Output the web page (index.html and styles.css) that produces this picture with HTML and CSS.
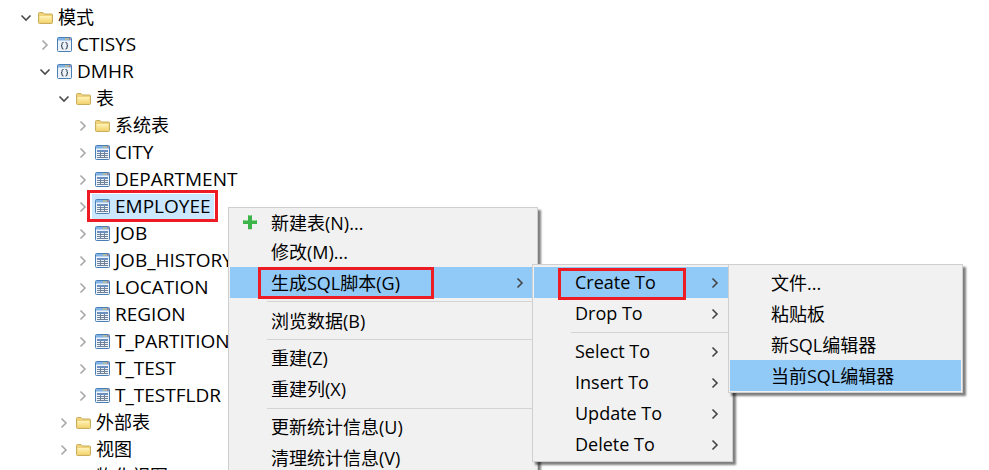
FILE: index.html
```html
<!DOCTYPE html>
<html lang="zh-CN">
<head>
    <meta charset="UTF-8">
    <meta name="viewport" content="width=device-width, initial-scale=1.0">
    <title>DM Manager</title>
    <link rel="stylesheet" href="styles.css">
</head>
<body>
    <svg class="defs" width="0" height="0">
        <linearGradient id="folder-fill" x1="0" y1="0" x2="0" y2="1">
            <stop offset="0" stop-color="#fff3b8"/>
            <stop offset="1" stop-color="#f4d46e"/>
        </linearGradient>
        <symbol id="i-folder" viewBox="0 0 15 12">
            <path d="M.5 10.500V1.500q0-1 1-1h3.500l1.500 1.500h7q1 0 1 1v7.500q0 1-1 1h-12q-1 0-1-1z" fill="#efd27a" stroke="#c8ae5a"/>
            <path d="M1.500 4h12v6.500h-12z" fill="url(#folder-fill)"/>
        </symbol>
        <symbol id="i-schema" viewBox="0 0 15 15">
            <rect x=".5" y=".5" width="14" height="14" rx="1" fill="#eef3f9" stroke="#4a7fb5"/>
            <rect x="1" y="1" width="13" height="2.500" fill="#7fb2e6"/>
            <path d="M8 2h2M10.500 2h1.500" stroke="#e8c54c"/>
            <path d="M12 2h1.500" stroke="#d9534f"/>
            <path d="M6.500 5.500q-1.500 0-1.500 1v1.200q0 1-1 1 1 0 1 1v1.300q0 1 1.500 1M8.500 5.500q1.500 0 1.500 1v1.200q0 1 1 1-1 0-1 1v1.300q0 1-1.500 1" fill="none" stroke="#1f2e44"/>
        </symbol>
        <symbol id="i-table" viewBox="0 0 15 15">
            <rect x=".5" y=".5" width="14" height="14" rx="1" fill="#eef3f9" stroke="#4a7fb5"/>
            <rect x="1" y="1" width="13" height="2.500" fill="#7fb2e6"/>
            <path d="M8 2h2M10.500 2h1.500" stroke="#e8c54c"/>
            <path d="M12 2h1.500" stroke="#d9534f"/>
            <rect x="2" y="5" width="11" height="2" fill="#6b8fbf"/>
            <path d="M2 8.500h11M2 10.500h11M2 12.500h11M5.500 7v6M9.500 7v6" stroke="#6f8299" fill="none"/>
        </symbol>
        <symbol id="i-right" viewBox="0 0 8 12">
            <path d="M1.500 1.500L6 6l-4.500 4.500" fill="none" stroke="currentColor" stroke-width="1.600"/>
        </symbol>
        <symbol id="i-down" viewBox="0 0 12 8">
            <path d="M1.500 1.500L6 6l4.500-4.500" fill="none" stroke="currentColor" stroke-width="1.600"/>
        </symbol>
    </svg>

    <ul class="tree">
        <li>
            <div class="row"><svg class="tw open"><use href="#i-down"/></svg><svg class="icon folder"><use href="#i-folder"/></svg><span class="cn">模式</span></div>
            <ul>
                <li><div class="row"><svg class="tw"><use href="#i-right"/></svg><svg class="icon"><use href="#i-schema"/></svg><span>CTISYS</span></div></li>
                <li>
                    <div class="row"><svg class="tw open"><use href="#i-down"/></svg><svg class="icon"><use href="#i-schema"/></svg><span>DMHR</span></div>
                    <ul>
                        <li>
                            <div class="row"><svg class="tw open"><use href="#i-down"/></svg><svg class="icon folder"><use href="#i-folder"/></svg><span class="cn">表</span></div>
                            <ul>
                                <li><div class="row"><svg class="tw"><use href="#i-right"/></svg><svg class="icon folder"><use href="#i-folder"/></svg><span class="cn">系统表</span></div></li>
                                <li><div class="row"><svg class="tw"><use href="#i-right"/></svg><svg class="icon"><use href="#i-table"/></svg><span>CITY</span></div></li>
                                <li><div class="row"><svg class="tw"><use href="#i-right"/></svg><svg class="icon"><use href="#i-table"/></svg><span>DEPARTMENT</span></div></li>
                                <li><div class="row selected"><svg class="tw"><use href="#i-right"/></svg><div class="label"><svg class="icon"><use href="#i-table"/></svg><span>EMPLOYEE</span></div></div></li>
                                <li><div class="row"><svg class="tw"><use href="#i-right"/></svg><svg class="icon"><use href="#i-table"/></svg><span>JOB</span></div></li>
                                <li><div class="row"><svg class="tw"><use href="#i-right"/></svg><svg class="icon"><use href="#i-table"/></svg><span>JOB_HISTORY</span></div></li>
                                <li><div class="row"><svg class="tw"><use href="#i-right"/></svg><svg class="icon"><use href="#i-table"/></svg><span>LOCATION</span></div></li>
                                <li><div class="row"><svg class="tw"><use href="#i-right"/></svg><svg class="icon"><use href="#i-table"/></svg><span>REGION</span></div></li>
                                <li><div class="row"><svg class="tw"><use href="#i-right"/></svg><svg class="icon"><use href="#i-table"/></svg><span>T_PARTITION</span></div></li>
                                <li><div class="row"><svg class="tw"><use href="#i-right"/></svg><svg class="icon"><use href="#i-table"/></svg><span>T_TEST</span></div></li>
                                <li><div class="row"><svg class="tw"><use href="#i-right"/></svg><svg class="icon"><use href="#i-table"/></svg><span>T_TESTFLDR</span></div></li>
                            </ul>
                        </li>
                        <li><div class="row"><svg class="tw"><use href="#i-right"/></svg><svg class="icon folder"><use href="#i-folder"/></svg><span class="cn">外部表</span></div></li>
                        <li><div class="row"><svg class="tw"><use href="#i-right"/></svg><svg class="icon folder"><use href="#i-folder"/></svg><span class="cn">视图</span></div></li>
                        <li><div class="row"><svg class="tw"><use href="#i-right"/></svg><svg class="icon folder"><use href="#i-folder"/></svg><span class="cn">物化视图</span></div></li>
                    </ul>
                </li>
            </ul>
        </li>
    </ul>

    <div class="menu menu-main">
        <div class="item first">
            <svg class="plus" viewBox="0 0 14 15"><path d="M5 0h4v5h5v4H9v5H5V9H0V5h5z" fill="#3cb44a"/><path d="M5 14h4v1H5z" fill="#cfd8cf"/><path d="M5.500 .5h3M.5 5.500h4.500M9 5.500h4.500" stroke="#8fdc8f" fill="none"/></svg>
            <span>新建表(N)...</span>
        </div>
        <div class="item"><span>修改(M)...</span></div>
        <div class="item active"><span>生成SQL脚本(G)</span><svg class="arrow"><use href="#i-right"/></svg></div>
        <div class="sep"></div>
        <div class="item"><span>浏览数据(B)</span></div>
        <div class="sep tight"></div>
        <div class="item"><span>重建(Z)</span></div>
        <div class="item"><span>重建列(X)</span></div>
        <div class="sep low"></div>
        <div class="item"><span>更新统计信息(U)</span></div>
        <div class="item"><span>清理统计信息(V)</span></div>
    </div>

    <div class="menu menu-script">
        <div class="item active"><span>Create To</span><svg class="arrow"><use href="#i-right"/></svg></div>
        <div class="item"><span>Drop To</span><svg class="arrow"><use href="#i-right"/></svg></div>
        <div class="sep"></div>
        <div class="item"><span>Select To</span><svg class="arrow"><use href="#i-right"/></svg></div>
        <div class="item"><span>Insert To</span><svg class="arrow"><use href="#i-right"/></svg></div>
        <div class="item"><span>Update To</span><svg class="arrow"><use href="#i-right"/></svg></div>
        <div class="item"><span>Delete To</span><svg class="arrow"><use href="#i-right"/></svg></div>
    </div>

    <div class="menu menu-target">
        <div class="item"><span>文件...</span></div>
        <div class="item"><span>粘贴板</span></div>
        <div class="item"><span>新SQL编辑器</span></div>
        <div class="item active"><span>当前SQL编辑器</span></div>
    </div>

    <div class="mark mark-table"></div>
    <div class="mark mark-script"></div>
    <div class="mark mark-create"></div>
</body>
</html>
```

FILE: styles.css
```css
html, body {
    margin: 0;
    padding: 0;
    height: 470px;
    overflow: hidden;
    background-color: white;
}
body {
    position: relative;
    font-family: "Open Sans", "Noto Sans CJK SC", sans-serif;
    font-size: 18px;
    color: #000;
}
.defs {
    position: absolute;
}
ul {
    list-style: none;
    margin: 0;
    padding: 0 0 0 19px;
}
.tree {
    padding: 4px 0 0 20px;
}
.row {
    display: flex;
    align-items: center;
    height: 27px;
    white-space: nowrap;
    font-size: 19px;
}
.row span {
    margin-left: 5px;
    padding-bottom: 2px;
    line-height: 24px;
}
.row .cn {
    font-size: 18px;
}
.tw {
    width: 8px;
    height: 12px;
    margin-left: 2px;
    margin-right: 8px;
    flex-shrink: 0;
    color: #a8a8a8;
}
.tw.open {
    width: 12px;
    height: 8px;
    margin-left: 0;
    margin-right: 6px;
    color: #4a4a4a;
}
.icon {
    width: 15px;
    height: 15px;
    flex-shrink: 0;
}
.icon.folder {
    height: 12px;
}
.label {
    display: flex;
    align-items: center;
    height: 26px;
    margin-left: -3px;
    padding: 0 3px;
    background-color: #cce8ff;
}
.menu {
    position: absolute;
    box-sizing: border-box;
    background-color: #f1f1f1;
    border: 1px solid #cfcfcf;
    padding: 1px;
    box-shadow: 3px 3px 2px rgba(0, 0, 0, 0.5);
}
.menu-main {
    left: 228px;
    top: 207px;
    width: 310px;
    height: 300px;
}
.menu-script {
    left: 532px;
    top: 264px;
    width: 201px;
    height: 198px;
}
.menu-target {
    left: 728px;
    top: 264px;
    width: 235px;
    height: 129px;
}
.item {
    display: flex;
    align-items: center;
    height: 31px;
    padding-left: 41px;
    padding-right: 12px;
    white-space: nowrap;
    position: relative;
}
.item span {
    flex: 1;
    padding-bottom: 2px;
}
.item.first {
    height: 27px;
}
.active {
    background-color: #91c9f7;
}
.menu-script .item:first-child,
.menu-target .item:first-child {
    margin-top: 1px;
}
.sep {
    height: 1px;
    margin: 3px 0 3px 37px;
    background-color: #d4d4d4;
}
.sep.tight {
    margin-bottom: 2px;
}
.sep.low {
    margin-top: 4px;
    margin-bottom: 2px;
}
.arrow {
    width: 8px;
    height: 12px;
    color: #444;
}
.plus {
    position: absolute;
    left: 13px;
    top: 6px;
    width: 14px;
    height: 15px;
}
.mark {
    position: absolute;
    box-sizing: border-box;
    border: 3px solid #ed1c24;
}
.mark-table {
    left: 87px;
    top: 190px;
    width: 131px;
    height: 32px;
}
.mark-script {
    left: 258px;
    top: 267px;
    width: 176px;
    height: 32px;
}
.mark-create {
    left: 558px;
    top: 268px;
    width: 128px;
    height: 32px;
}
```
